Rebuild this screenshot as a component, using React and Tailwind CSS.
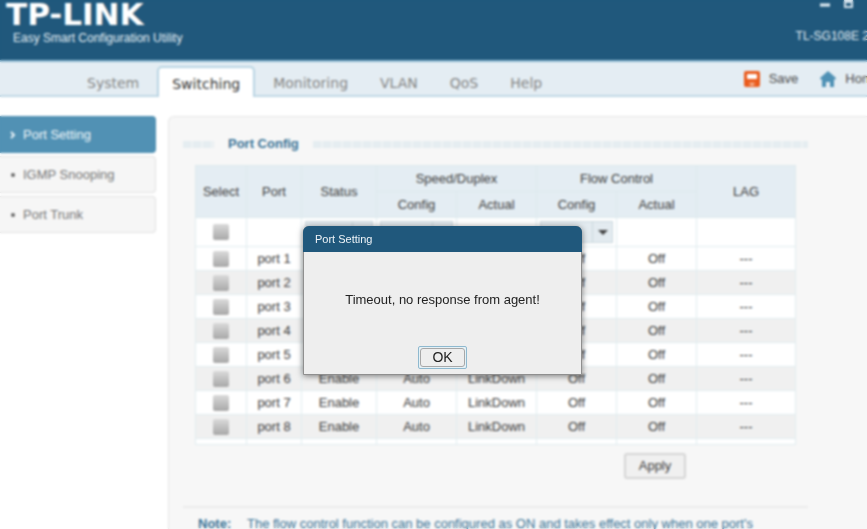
import React from 'react'

const TABS = ['System', 'Switching', 'Monitoring', 'VLAN', 'QoS', 'Help']
const MENU = ['Port Setting', 'IGMP Snooping', 'Port Trunk']
const PORTS = [1, 2, 3, 4, 5, 6, 7, 8]

const CELL = 'border border-[#e1ecef] p-0 text-center'
const HEAD = 'border border-[#dde9ed] p-0 text-center font-normal'

function TitleBar() {
  return (
    <header className="flex h-[62px] justify-between border-b-2 border-[#8db8d0] bg-[#20587c] pr-[21px] text-white">
      <div className="pl-[6px]">
        <p className="font-['DejaVu_Sans',sans-serif] text-[31px] leading-[28px] font-bold">TP-LINK</p>
        <p className="pl-[7px] text-[12px] leading-[20px] text-[#e6f0f6]">Easy Smart Configuration Utility</p>
      </div>
      <div className="flex flex-col items-end">
        <div className="flex h-[28px] gap-[12px]">
          <button type="button" aria-label="Minimize" className="h-3 w-3">
            <svg viewBox="0 0 12 12" className="h-3 w-3"><path d="M1 5h10" stroke="#e6f0f6" strokeWidth="3" /></svg>
          </button>
          <button type="button" aria-label="Maximize" className="h-3 w-3">
            <svg viewBox="0 0 12 12" className="h-3 w-3" fill="none" stroke="#d5e3ec" strokeWidth="2">
              <path d="M2 0h7v7H2zM2 2h7" />
            </svg>
          </button>
          <button type="button" aria-label="Close" className="h-3 w-3">
            <svg viewBox="0 0 12 12" className="h-3 w-3"><path d="M2 0l8 8M10 0l-8 8" stroke="#d5e3ec" strokeWidth="2" /></svg>
          </button>
        </div>
        <p className="text-[12px] leading-[16px] text-[#e6f0f6]">TL-SG108E 2.0</p>
      </div>
    </header>
  )
}

function NavBar() {
  return (
    <nav className="flex h-[35px] justify-between border-b-2 border-[#c0d8e5] bg-[#e4edf3] pr-[20px]">
      <div className="flex items-end gap-1 pl-[73px] font-['DejaVu_Sans',sans-serif] text-[14px]">
        {TABS.map((t) => (
          <a
            key={t}
            href="#"
            className={
              t === 'Switching'
                ? '-mb-[2px] h-[31px] rounded-t-[5px] border-2 border-b-0 border-[#b9d5e3] bg-white px-[13px] leading-[32px] text-[#333]'
                : 'h-[29px] px-[14px] leading-[34px] text-[#858585]'
            }
          >
            {t}
          </a>
        ))}
      </div>
      <div className="flex items-center gap-[22px] text-[13px] text-[#4a4a4a]">
        <button type="button" className="flex items-center gap-[9px]">
          <svg viewBox="0 0 16 16" className="h-4 w-4">
            <rect width="16" height="16" rx="2" fill="#ea5b1c" />
            <rect x="3" y="3" width="10" height="5" rx="1" fill="#fff" />
            <rect x="5" y="11" width="6" height="4" fill="#f08350" />
            <rect x="7" y="12" width="2" height="3" fill="#f6b89a" />
          </svg>
          Save
        </button>
        <button type="button" className="flex items-center gap-[9px]">
          <svg viewBox="0 0 16 16" className="h-4 w-4" fill="#4f91b5">
            <path d="M8 0l8 7-1 2-1-1v8h-4v-5H6v5H2V8L1 9 0 7z" />
          </svg>
          Home
        </button>
      </div>
    </nav>
  )
}

function SideMenu() {
  return (
    <aside className="w-[156px] shrink-0">
      <ul className="flex flex-col gap-[3px] text-[13px]">
        {MENU.map((m, i) => (
          <li key={m}>
            <a
              href="#"
              className={
                i === 0
                  ? 'flex h-[37px] items-center rounded-r-[4px] border border-l-0 border-[#5191b4] bg-[#5191b4] pl-[10px] text-[#f2f8fb]'
                  : 'flex h-[37px] items-center rounded-r-[4px] border border-l-0 border-[#e2e2e2] bg-[#f6f6f6] pl-[10px] text-[#757575]'
              }
            >
              <svg viewBox="0 0 6 8" className="mr-[7px] h-2 w-[6px]" fill="none">
                {i === 0 ? (
                  <path d="M1 1l3 3-3 3" stroke="#e8f1f6" strokeWidth="2" />
                ) : (
                  <circle cx="3" cy="4" r="2" fill="#666" />
                )}
              </svg>
              {m}
            </a>
          </li>
        ))}
      </ul>
    </aside>
  )
}

function Dots({ className }) {
  return (
    <span
      className={`h-[7px] bg-[repeating-linear-gradient(90deg,#e5edf1_0_8px,#eef2f4_8px_10px)] ${className}`}
    />
  )
}

function Check({ label }) {
  return (
    <input
      type="checkbox"
      aria-label={label}
      className="mx-auto block h-4 w-4 appearance-none rounded-[2px] bg-linear-to-b from-[#dadada] to-[#a8a8a8]"
    />
  )
}

function Drop({ label }) {
  return (
    <div className="relative mx-[3px]">
      <select
        aria-label={label}
        className="block h-[22px] w-full appearance-none border border-[#cbd8de] bg-[#e3ebf0] text-[13px]"
      >
        <option></option>
      </select>
      <span className="pointer-events-none absolute top-0 right-0 flex h-[22px] w-[21px] items-center justify-center border-l border-[#cbd8de]">
        <svg viewBox="0 0 10 5" className="h-[5px] w-[10px]"><path d="M0 0h10L5 5z" fill="#444" /></svg>
      </span>
    </div>
  )
}

function PortTable() {
  return (
    <table className="w-[601px] table-fixed border-collapse border border-[#e1ecef] bg-white text-[13px] leading-[16px] text-[#3c3c3c]">
      <colgroup>
        <col className="w-[51px]" />
        <col className="w-[55px]" />
        <col className="w-[75px]" />
        <col className="w-[80px]" />
        <col className="w-[80px]" />
        <col className="w-[80px]" />
        <col className="w-[80px]" />
        <col />
      </colgroup>
      <thead className="bg-[#e4edf3]">
        <tr className="h-[26px]">
          <th rowSpan={2} className={HEAD}>Select</th>
          <th rowSpan={2} className={HEAD}>Port</th>
          <th rowSpan={2} className={HEAD}>Status</th>
          <th colSpan={2} className={HEAD}>Speed/Duplex</th>
          <th colSpan={2} className={HEAD}>Flow Control</th>
          <th rowSpan={2} className={HEAD}>LAG</th>
        </tr>
        <tr className="h-[26px]">
          <th className={HEAD}>Config</th>
          <th className={HEAD}>Actual</th>
          <th className={HEAD}>Config</th>
          <th className={HEAD}>Actual</th>
        </tr>
      </thead>
      <tbody>
        <tr className="h-[29px]">
          <td className={CELL}><Check label="All ports" /></td>
          <td className={CELL}></td>
          <td className={CELL}><Drop label="Status" /></td>
          <td className={CELL}><Drop label="Speed/Duplex" /></td>
          <td className={CELL}></td>
          <td className={CELL}><Drop label="Flow Control" /></td>
          <td className={CELL}></td>
          <td className={CELL}></td>
        </tr>
        {PORTS.map((p) => (
          <tr key={p} className="h-[24px] even:bg-white odd:bg-[#f0f0f0]">
            <td className={CELL}><Check label={`Select port ${p}`} /></td>
            <td className={CELL}>port {p}</td>
            <td className={CELL}>Enable</td>
            <td className={CELL}>Auto</td>
            <td className={CELL}>LinkDown</td>
            <td className={CELL}>Off</td>
            <td className={CELL}>Off</td>
            <td className={CELL}>---</td>
          </tr>
        ))}
        <tr className="h-[6px]">
          {PORTS.map((p) => (
            <td key={p} className={CELL}></td>
          ))}
        </tr>
      </tbody>
    </table>
  )
}

function PortConfig() {
  return (
    <section className="flex-1 rounded-tl-[6px] border border-r-0 border-[#e6e6e6] bg-[#f7f7f7] pl-[14px]">
      <div className="w-[625px]">
        <div className="mt-[17px] flex h-[20px] items-center">
          <Dots className="w-[31px]" />
          <h2 className="mx-[14px] text-[13px] font-bold text-[#3a7396]">Port Config</h2>
          <Dots className="flex-1" />
        </div>
        <div className="mt-[11px] pl-3">
          <PortTable />
        </div>
        <div className="mt-[8px] flex justify-end pr-[122px]">
          <button type="button" className="h-[26px] w-[62px] rounded-[3px] border-2 border-[#d6d6d6] bg-[#f0f0f0] text-[13px] text-[#3c3c3c]">
            Apply
          </button>
        </div>
        <hr className="mt-[27px] border-t-2 border-[#ebebeb]" />
        <div className="mt-[8px] flex pl-[15px] text-[13px] leading-[16px] text-[#3a7396]">
          <strong className="w-[49px] shrink-0">Note:</strong>
          <p>
            The flow control function can be configured as ON and takes effect only when one port's
          </p>
        </div>
      </div>
    </section>
  )
}

function AlertDialog() {
  return (
    <div className="fixed inset-0 flex items-center justify-center pt-[71px] pl-[18px] backdrop-blur-[1px]">
      <div
        role="dialog"
        aria-label="Port Setting"
        className="w-[279px] rounded-t-[6px] border border-[#8f8f8f] bg-[#eee] shadow-[0_1px_6px_rgba(0,0,0,0.5)]"
      >
        <h3 className="-mx-px -mt-px h-[26px] rounded-t-[6px] bg-[#20587c] pl-[12px] text-[11px] leading-[26px] text-[#eef4f8]">
          Port Setting
        </h3>
        <p className="mt-[38px] text-center text-[13px] leading-[20px] text-[#222]">Timeout, no response from agent!</p>
        <div className="mt-[36px] mb-[5px] flex justify-center">
          <button type="button" className="h-[23px] w-[49px] rounded-[2px] border border-[#8fb9cf] bg-[#e6f1f6] p-px">
            <span className="block rounded-[3px] border border-[#a8a8a8] bg-[#eee] text-[14px] leading-[17px] text-[#222]">OK</span>
          </button>
        </div>
      </div>
    </div>
  )
}

export default function App() {
  return (
    <div className="h-screen overflow-hidden bg-white font-['Liberation_Sans',Arial,sans-serif]">
      <div className="flex min-h-full min-w-[900px] flex-col">
        <TitleBar />
        <NavBar />
        <main className="flex flex-1 gap-[12px] pt-[19px]">
          <SideMenu />
          <PortConfig />
        </main>
      </div>
      <AlertDialog />
    </div>
  )
}
